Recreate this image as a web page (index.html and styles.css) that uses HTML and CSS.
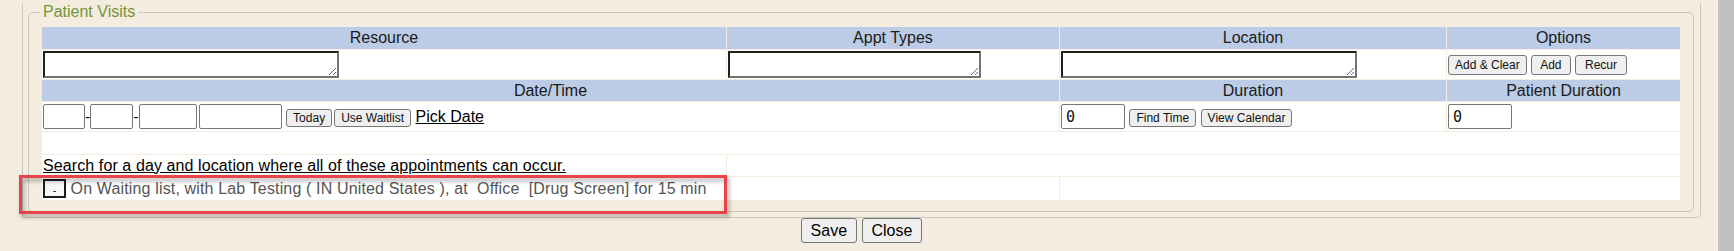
FILE: index.html
```html
<!DOCTYPE html>
<html lang="en">

<head>
    <meta charset="UTF-8">
    <meta name="viewport" content="width=device-width, initial-scale=1.0">
    <title>Patient Visits</title>
    <link rel="stylesheet" href="styles.css">
</head>

<body>
    <div class="screen">
        <div class="page">
            <div class="panel">
                <fieldset class="visits">
                    <legend>Patient Visits</legend>
                    <table class="grid">
                        <colgroup>
                            <col class="c1">
                            <col class="c2">
                            <col class="c3">
                            <col class="c4">
                        </colgroup>
                        <tr class="head">
                            <th>Resource</th>
                            <th>Appt Types</th>
                            <th>Location</th>
                            <th>Options</th>
                        </tr>
                        <tr class="fields">
                            <td><textarea class="ta ta-resource"></textarea></td>
                            <td><textarea class="ta ta-appt"></textarea></td>
                            <td><textarea class="ta ta-location"></textarea></td>
                            <td class="opts"><button class="btn">Add &amp; Clear</button> <button class="btn btn-add">Add</button> <button class="btn btn-recur">Recur</button></td>
                        </tr>
                        <tr class="head head-2">
                            <th colspan="2">Date/Time</th>
                            <th>Duration</th>
                            <th>Patient Duration</th>
                        </tr>
                        <tr class="fields-2">
                            <td colspan="2"><input class="in d-mm">-<input class="in d-dd">-<input class="in d-yy"><input class="in d-time"> <button class="btn btn-s">Today</button><button class="btn btn-s btn-next">Use Waitlist</button> <a class="link" href="#">Pick Date</a></td>
                            <td><input class="in num" value="0"> <button class="btn btn-s">Find Time</button> <button class="btn btn-s">View Calendar</button></td>
                            <td><input class="in num" value="0"></td>
                        </tr>
                        <tr class="blank">
                            <td colspan="4"></td>
                        </tr>
                        <tr class="search">
                            <td><a class="link" href="#">Search for a day and location where all of these appointments can occur.</a></td>
                            <td colspan="3"></td>
                        </tr>
                        <tr class="wait">
                            <td><button class="mini">-</button> On Waiting list, with Lab Testing ( IN United States ), at&nbsp; Office&nbsp; [Drug Screen] for 15 min</td>
                            <td></td>
                            <td colspan="2"></td>
                        </tr>
                    </table>
                </fieldset>
            </div>
            <div class="actions">
                <button class="btn-lg">Save</button> <button class="btn-lg">Close</button>
            </div>
        </div>
        <div class="scrollbar">
            <div class="thumb"></div>
        </div>
    </div>
    <div class="callout"></div>
</body>

</html>
```

FILE: styles.css
```css
* {
    margin: 0;
    padding: 0;
    box-sizing: border-box;
}

body {
    position: relative;
    background-color: #f3ecdf;
    font-family: "Liberation Sans", Arial, sans-serif;
    font-size: 16px;
    color: #1a1a1a;
    overflow: hidden;
}

.screen {
    display: flex;
    height: 251px;
}

.page {
    flex: 1;
}

/* outer box, its top is above the visible area */
.panel {
    margin: 0 16px 0 22px;
    padding: 0 6px 5px 5px;
    border: 1px solid #cbc8c2;
    border-top: none;
    border-radius: 0 0 4px 4px;
}

.visits {
    margin-top: 3px;
    padding: 5px 12px 10px 12px;
    border: 1px solid #ccc8bf;
    border-radius: 5px;
}

.visits legend {
    padding: 0 3px;
    margin-left: -1px;
    color: #74963a;
    font-size: 16px;
}

.grid {
    width: 100%;
    table-layout: fixed;
    border-collapse: separate;
    border-spacing: 1px;
}

.c1 {
    width: 684px;
}

.c2 {
    width: 332px;
}

.c3 {
    width: 386px;
}

.c4 {
    width: 233px;
}

.grid td,
.grid th {
    padding: 1px;
    background-color: #fff;
    text-align: left;
    vertical-align: middle;
    white-space: nowrap;
    overflow: hidden;
}

.grid th {
    background-color: #bccbe6;
    font-weight: normal;
    text-align: center;
    color: #1a1a1a;
}

.head th {
    height: 22px;
}

.head-2 th {
    height: 21px;
}

.fields td {
    height: 29px;
}

.fields-2 td {
    height: 29px;
}

.blank td {
    height: 22px;
}

.search td {
    height: 21px;
    letter-spacing: 0.1px;
}

.wait td {
    height: 23px;
    color: #555;
    letter-spacing: 0.15px;
}

.ta {
    display: block;
    height: 27px;
    border: 2px solid;
    border-color: #1f1f1f #737373 #737373 #1f1f1f;
    background-color: #fff;
    font-family: "Liberation Sans", Arial, sans-serif;
    font-size: 13px;
}

.ta-resource {
    width: 296px;
}

.ta-appt {
    width: 253px;
}

.ta-location {
    width: 296px;
}

.in {
    height: 25px;
    padding: 1px 4px;
    border: 1px solid #767676;
    border-radius: 2px;
    background-color: #fff;
    font-family: "DejaVu Sans Mono", "Liberation Mono", monospace;
    font-size: 15px;
    color: #111;
    vertical-align: baseline;
}

.d-mm {
    width: 42px;
}

.d-dd {
    width: 43px;
}

.d-yy {
    width: 58px;
}

.d-time {
    width: 83px;
    margin-left: 2px;
}

.num {
    width: 64px;
}

.btn {
    padding: 2px 6px;
    border: 1px solid #767676;
    border-radius: 3px;
    background-color: #efefef;
    font-family: "Liberation Sans", Arial, sans-serif;
    font-size: 12px;
    color: #111;
}

.btn-add {
    padding: 2px 8px;
}

.btn-recur {
    padding: 2px 9px;
}

.btn-s {
    padding: 1px 6px;
}

.btn-next {
    margin-left: 2px;
}

.link {
    color: #000;
    text-decoration: underline;
}

.mini {
    width: 23px;
    height: 19px;
    border: 2px solid #1c1c1c;
    background-color: #f7f7f7;
    font-family: "Liberation Sans", Arial, sans-serif;
    font-size: 11px;
    line-height: 19px;
    color: #111;
}

.actions {
    margin: 0 16px 0 22px;
    text-align: center;
}

.btn-lg {
    height: 25px;
    padding: 1px 9px;
    border: 1px solid #767676;
    border-radius: 3px;
    background-color: #efefef;
    font-family: "Liberation Sans", Arial, sans-serif;
    font-size: 16px;
    color: #000;
}

.scrollbar {
    width: 17px;
    padding-left: 1px;
    background-color: #f1f1f1;
}

.thumb {
    height: 100%;
    background-color: #c1c1c1;
}

/* red highlight drawn over the waiting list row */
.callout {
    position: absolute;
    left: 19px;
    top: 175px;
    width: 708px;
    height: 39px;
    border: 3px solid #e8454b;
    filter: drop-shadow(2px 3px 2px rgba(0, 0, 0, 0.35));
}
```
